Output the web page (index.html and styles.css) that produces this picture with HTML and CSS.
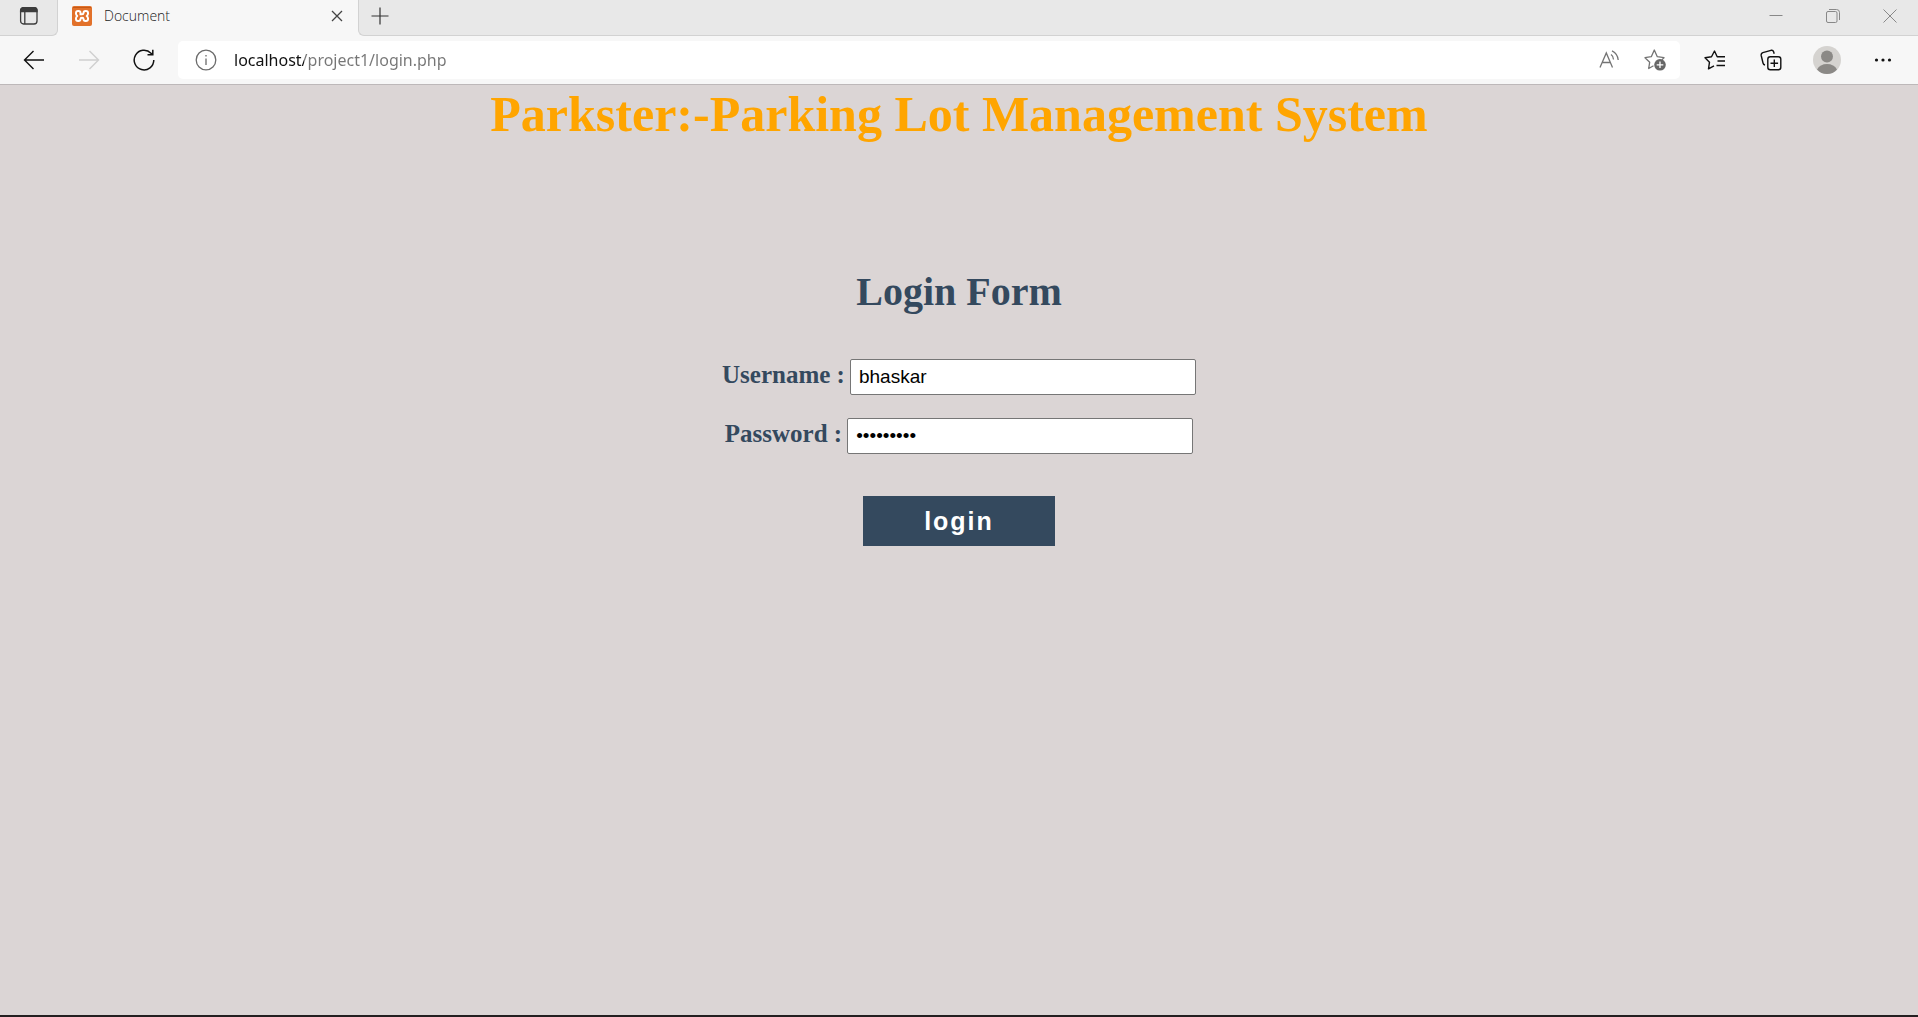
FILE: index.html
```html
<!DOCTYPE html>
<html lang="en">
<head>
<meta charset="utf-8">
<meta name="viewport" content="width=device-width, initial-scale=1">
<title>Document</title>
<link rel="stylesheet" href="styles.css">
</head>
<body>
<header class="browser">
  <div class="tabstrip">
    <button class="workspace" type="button" aria-label="Tab actions">
      <svg width="20" height="20" viewBox="0 0 20 20" fill="none" stroke="#3c3c3c" stroke-width="1.3"><rect x="1.6" y="1.6" width="16.4" height="16.4" rx="3"/><path d="M1.6 5.5V4.4a2.8 2.8 0 0 1 2.8-2.8h10.8A2.8 2.8 0 0 1 18 4.4v1.1z" fill="#3c3c3c"/><path d="M5.8 5.5V18"/></svg>
    </button>
    <div class="tab">
      <svg width="20" height="20" viewBox="0 0 20 20"><rect width="20" height="20" rx="2" fill="#e2712a"/><path d="M1 1.5h18" stroke="#c55a17"/><path d="M8.500 8.300V7a2 2 0 0 0-2-2H6a2 2 0 0 0-2 2v.800Q4 9 5.300 10 4 11 4 12.200v.800a2 2 0 0 0 2 2h.500a2 2 0 0 0 2-2q0-1.200 1.500-1.200t1.500 1.200a2 2 0 0 0 2 2h.500a2 2 0 0 0 2-2v-.800q0-1.200-1.300-2.200Q16 9 16 7.800V7a2 2 0 0 0-2-2h-.500a2 2 0 0 0-2 2q0 1.200-1.500 1.200H7.500" fill="none" stroke="#fff" stroke-width="2" stroke-linejoin="round"/></svg>
      <span class="tab-title">Document</span>
      <button class="tab-close" type="button" aria-label="Close tab">
        <svg width="12" height="12" viewBox="0 0 12 12" stroke="#444" stroke-width="1.3"><path d="M1 1l10 10M11 1L1 11"/></svg>
      </button>
    </div>
    <div class="strip-rest">
      <button class="new-tab" type="button" aria-label="New tab">
        <svg width="18" height="18" viewBox="0 0 18 18" stroke="#333" stroke-width="1.2"><path d="M9 .5v17M.5 9h17"/></svg>
      </button>
      <div class="window-buttons">
        <button type="button" aria-label="Minimize"><svg width="14" height="14" viewBox="0 0 14 14" stroke="#888"><path d="M.5 6.5h13"/></svg></button>
        <button type="button" aria-label="Restore"><svg width="14" height="14" viewBox="0 0 14 14" fill="none" stroke="#888"><rect x=".5" y="2.5" width="10.5" height="11" rx="1.5"/><path d="M3 .5h7.500a3 3 0 0 1 3 3V11"/></svg></button>
        <button type="button" aria-label="Close"><svg width="14" height="14" viewBox="0 0 14 14" stroke="#888"><path d="M.5.5l13 13M13.500.5l-13 13"/></svg></button>
      </div>
    </div>
  </div>
  <div class="toolbar">
    <div class="nav">
      <button type="button" aria-label="Back"><svg width="22" height="20" viewBox="0 0 22 20" fill="none" stroke="#111" stroke-width="1.4"><path d="M21 10H1.500M10.500 1L1.500 10l9 9"/></svg></button>
      <button type="button" aria-label="Forward"><svg width="22" height="20" viewBox="0 0 22 20" fill="none" stroke="#d0d0d0" stroke-width="1.4"><path d="M1 10h19.500M11.500 1l9 9-9 9"/></svg></button>
      <button type="button" aria-label="Refresh"><svg width="22" height="22" viewBox="0 0 22 22" fill="none" stroke="#111" stroke-width="1.5"><path d="M20.800 11A9.800 9.800 0 1 1 18 4.200l1.500 1.600M19.800.8v5h-5.300"/></svg></button>
    </div>
    <div class="address">
      <svg width="22" height="22" viewBox="0 0 22 22" fill="none" stroke="#6b6b6b" stroke-width="1.3"><circle cx="11" cy="11" r="9.800"/><path d="M11 9.500v6.500M11 6v1.600"/></svg>
      <input class="url" type="text" aria-label="Address" value="localhost/project1/login.php">
      <button type="button" aria-label="Read aloud"><svg width="20" height="20" viewBox="0 0 20 20" fill="none" stroke="#747474" stroke-width="1.3"><path d="M1 17.500L7.300 3l6.200 14.500M3.200 12.500h8.200M12 4.500q2.300 1.500 2.500 5M13 .8q5.800 3 6.200 9.200"/></svg></button>
      <button type="button" aria-label="Add to favorites"><svg width="22" height="22" viewBox="0 0 22 22" fill="none" stroke="#747474" stroke-width="1.3" stroke-linejoin="round"><path d="M9.500 16.800L4.700 19.500l1-6.300L1 8.700l6.300-1L10.300 1l3 6.700 6.700 1-2.200 2.200"/><circle cx="16" cy="15.800" r="5.800" fill="#666" stroke="none"/><path d="M16 12.500v6.600M12.700 15.800h6.600" stroke="#fff"/></svg></button>
    </div>
    <div class="tools">
      <button type="button" aria-label="Favorites"><svg width="22" height="20" viewBox="0 0 22 20" fill="none" stroke="#111" stroke-width="1.4" stroke-linejoin="round"><path d="M10 15.800L4.500 18.800l1-6.600L1 7.800l6.500-1L10.500 1l2.700 5.800H21M13.500 11H21M12.500 15.500H21"/></svg></button>
      <button type="button" aria-label="Collections"><svg width="22" height="22" viewBox="0 0 22 22" fill="none" stroke="#111" stroke-width="1.4" stroke-linejoin="round"><rect x="7.800" y="7.800" width="13" height="13" rx="2.500"/><path d="M14.300 10.500v7.600M10.500 14.300h7.600M5 16q-1.600-.4-2-2L1.200 6.500q-.4-2 1.600-2.800L11 1.300q2-.5 2.600 1.500l.6 2"/></svg></button>
      <button type="button" aria-label="Profile"><svg width="28" height="28" viewBox="0 0 28 28"><circle cx="14" cy="14" r="14" fill="#d5d3d0"/><circle cx="14" cy="10.500" r="6" fill="#8b8986"/><path d="M4 23.500Q7 18 14 18t10 5.500Q20 28 14 28T4 23.500z" fill="#8b8986"/></svg></button>
      <button type="button" aria-label="Settings and more"><svg width="18" height="4" viewBox="0 0 18 4" fill="#111"><circle cx="2.500" cy="2" r="1.600"/><circle cx="9" cy="2" r="1.600"/><circle cx="15.500" cy="2" r="1.600"/></svg></button>
    </div>
  </div>
</header>
<main class="page">
  <h1 class="site-title">Parkster:-Parking Lot Management System</h1>
  <form class="login">
    <h2 class="login-title">Login Form</h2>
    <div class="field"><label for="user">Username :</label><input id="user" type="text" value="bhaskar"></div>
    <div class="field"><label for="pass">Password :</label><input id="pass" type="password" value="bhaskar12"></div>
    <button class="submit" type="button">login</button>
  </form>
</main>
</body>
</html>
```
FILE: styles.css
```css
* { box-sizing: border-box; }

body {
  margin: 0;
  min-height: 100vh;
  display: flex;
  flex-direction: column;
  background: #dbd5d5;
  font-family: "Liberation Serif", "Times New Roman", serif;
}

button {
  border: 0;
  padding: 0;
  background: transparent;
}

svg { display: block; flex: none; }

/* Browser frame */
.browser {
  background: #f7f7f7;
  border-bottom: 1px solid #bdb8b9;
  font-family: "Open Sans", "Noto Sans", sans-serif;
}

.browser button {
  display: flex;
  align-items: center;
  justify-content: center;
}

.tabstrip { display: flex; height: 36px; }

.workspace,
.strip-rest {
  border-bottom: 1px solid #d2d2d2;
}

.browser .workspace {
  width: 58px;
  padding-bottom: 4px;
  background: #e8e8e8;
  border-right: 1px solid #d2d2d2;
  border-bottom: 1px solid #d2d2d2;
  border-bottom-right-radius: 6px;
}

.tab {
  width: 300px;
  display: flex;
  align-items: center;
  padding: 0 15px 4px 14px;
}

.tab-title {
  flex: 1;
  padding-left: 12px;
  font-size: 14px;
  font-weight: 300;
  line-height: 20px;
  color: #222;
}

.tab-close { width: 12px; height: 12px; }

.strip-rest {
  flex: 1;
  display: flex;
  justify-content: space-between;
  background: #e8e8e8;
  border-left: 1px solid #d2d2d2;
  border-bottom-left-radius: 6px;
  padding-bottom: 4px;
}

.new-tab { width: 42px; }

.window-buttons { display: flex; }
.window-buttons button { width: 57px; }

.toolbar {
  height: 48px;
  display: flex;
  align-items: center;
  gap: 7px;
  padding: 0 7px 0 6px;
}

.nav, .tools { display: flex; }
.nav button { width: 55px; height: 38px; }
.tools button { width: 56px; height: 38px; }

.address {
  flex: 1;
  height: 38px;
  display: flex;
  align-items: center;
  padding: 0 2px 0 17px;
  background: #fff;
  border-radius: 5px;
}

.address button { width: 46px; height: 38px; }

/* The host part of the address is darker than the path */
.url {
  flex: 1;
  min-width: 0;
  height: 26px;
  margin-left: 17px;
  padding: 0;
  border: 0;
  outline: 0;
  font: 16px/26px "Noto Sans", "Open Sans", sans-serif;
  color: transparent;
  background: linear-gradient(90deg, #111 70px, #767676 70px);
  background-clip: text;
  -webkit-background-clip: text;
}

/* Login page */
.page {
  flex: 1;
  display: flex;
  flex-direction: column;
  align-items: center;
  border-bottom: 2px solid #231f20;
}

.site-title {
  margin: 0;
  font-size: 50px;
  line-height: 58px;
  color: #ffa500;
}

.login {
  display: flex;
  flex-direction: column;
  align-items: center;
  margin-top: 126px;
  color: #34495e;
}

.login-title {
  margin: 0 0 44px;
  font-size: 40px;
  line-height: 46px;
}

.field {
  display: flex;
  align-items: baseline;
  gap: 5px;
  margin-bottom: 23px;
}

.field label {
  font-size: 25px;
  font-weight: 700;
  line-height: 28px;
}

.field input {
  width: 346px;
  height: 36px;
  padding: 0 8px;
  border: 1px solid #767676;
  border-radius: 2px;
  background: #fff;
  color: #000;
  font: 19px/22px "Liberation Sans", Arial, sans-serif;
}

.submit {
  width: 192px;
  height: 50px;
  margin-top: 19px;
  background: #34495e;
  color: #fff;
  font: 700 25px/28px "Liberation Sans", Arial, sans-serif;
  letter-spacing: 2px;
}
```
